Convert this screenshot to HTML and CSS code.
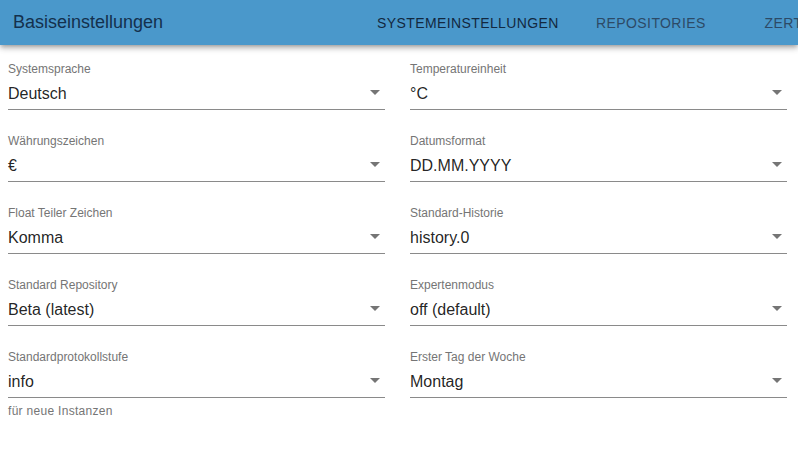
FILE: index.html
```html
<!DOCTYPE html>
<html lang="de">
<head>
    <meta charset="UTF-8">
    <title>Basiseinstellungen</title>
    <link rel="stylesheet" href="styles.css">
</head>
<body>
    <header class="appbar">
        <div class="title">Basiseinstellungen</div>
        <nav class="tabs">
            <div class="tab active">Systemeinstellungen</div>
            <div class="tab">Repositories</div>
            <div class="tab">Zertifikate</div>
        </nav>
    </header>

    <main class="form">
        <div class="field">
            <label>Systemsprache</label>
            <div class="select">Deutsch<svg class="arrow" viewBox="0 0 24 24"><path d="M7 10l5 5 5-5z"/></svg></div>
        </div>
        <div class="field">
            <label>Temperatureinheit</label>
            <div class="select">°C<svg class="arrow" viewBox="0 0 24 24"><path d="M7 10l5 5 5-5z"/></svg></div>
        </div>
        <div class="field">
            <label>Währungszeichen</label>
            <div class="select">€<svg class="arrow" viewBox="0 0 24 24"><path d="M7 10l5 5 5-5z"/></svg></div>
        </div>
        <div class="field">
            <label>Datumsformat</label>
            <div class="select">DD.MM.YYYY<svg class="arrow" viewBox="0 0 24 24"><path d="M7 10l5 5 5-5z"/></svg></div>
        </div>
        <div class="field">
            <label>Float Teiler Zeichen</label>
            <div class="select">Komma<svg class="arrow" viewBox="0 0 24 24"><path d="M7 10l5 5 5-5z"/></svg></div>
        </div>
        <div class="field">
            <label>Standard-Historie</label>
            <div class="select">history.0<svg class="arrow" viewBox="0 0 24 24"><path d="M7 10l5 5 5-5z"/></svg></div>
        </div>
        <div class="field">
            <label>Standard Repository</label>
            <div class="select">Beta (latest)<svg class="arrow" viewBox="0 0 24 24"><path d="M7 10l5 5 5-5z"/></svg></div>
        </div>
        <div class="field">
            <label>Expertenmodus</label>
            <div class="select">off (default)<svg class="arrow" viewBox="0 0 24 24"><path d="M7 10l5 5 5-5z"/></svg></div>
        </div>
        <div class="field">
            <label>Standardprotokollstufe</label>
            <div class="select">info<svg class="arrow" viewBox="0 0 24 24"><path d="M7 10l5 5 5-5z"/></svg></div>
            <p class="helper">für neue Instanzen</p>
        </div>
        <div class="field">
            <label>Erster Tag der Woche</label>
            <div class="select">Montag<svg class="arrow" viewBox="0 0 24 24"><path d="M7 10l5 5 5-5z"/></svg></div>
        </div>
    </main>
</body>
</html>
```

FILE: styles.css
```css
* {
    margin: 0;
    padding: 0;
    box-sizing: border-box;
}
body {
    background: #fff;
    font-family: "Liberation Sans", Arial, sans-serif;
    color: rgba(0,0,0,0.87);
    overflow: hidden;
}
.appbar {
    display: flex;
    align-items: center;
    height: 45px;
    background: #4a98cb;
    box-shadow: 0 2px 4px -1px rgba(0,0,0,0.25), 0 4px 5px 0 rgba(0,0,0,0.14), 0 1px 10px 0 rgba(0,0,0,0.1);
    white-space: nowrap;
    overflow: hidden;
}
.title {
    width: 365px;
    flex-shrink: 0;
    padding-left: 13px;
    font-size: 18px;
    color: #14304d;
}
.tabs {
    display: flex;
    height: 100%;
}
.tab {
    min-width: 160px;
    flex-shrink: 0;
    padding: 0 12px;
    display: flex;
    align-items: center;
    justify-content: center;
    font-size: 14px;
    letter-spacing: 0.4px;
    text-transform: uppercase;
    color: #2d4a66;
}
.tab.active {
    color: #13283f;
}
.form {
    display: grid;
    grid-template-columns: 1fr 1fr;
    column-gap: 25px;
    row-gap: 24px;
    padding: 17px 11px 0 8px;
}
.field label {
    display: block;
    font-size: 12px;
    line-height: 14px;
    color: #757575;
}
.select {
    position: relative;
    margin-top: 8px;
    padding: 0 0 6px;
    font-size: 16px;
    line-height: 19px;
    border-bottom: 1px solid #8a8a8a;
}
.arrow {
    position: absolute;
    right: -2px;
    top: -4px;
    width: 24px;
    height: 24px;
    fill: #757575;
}
.helper {
    margin-top: 6px;
    font-size: 12px;
    line-height: 14px;
    color: #757575;
    letter-spacing: 0.3px;
}
```
